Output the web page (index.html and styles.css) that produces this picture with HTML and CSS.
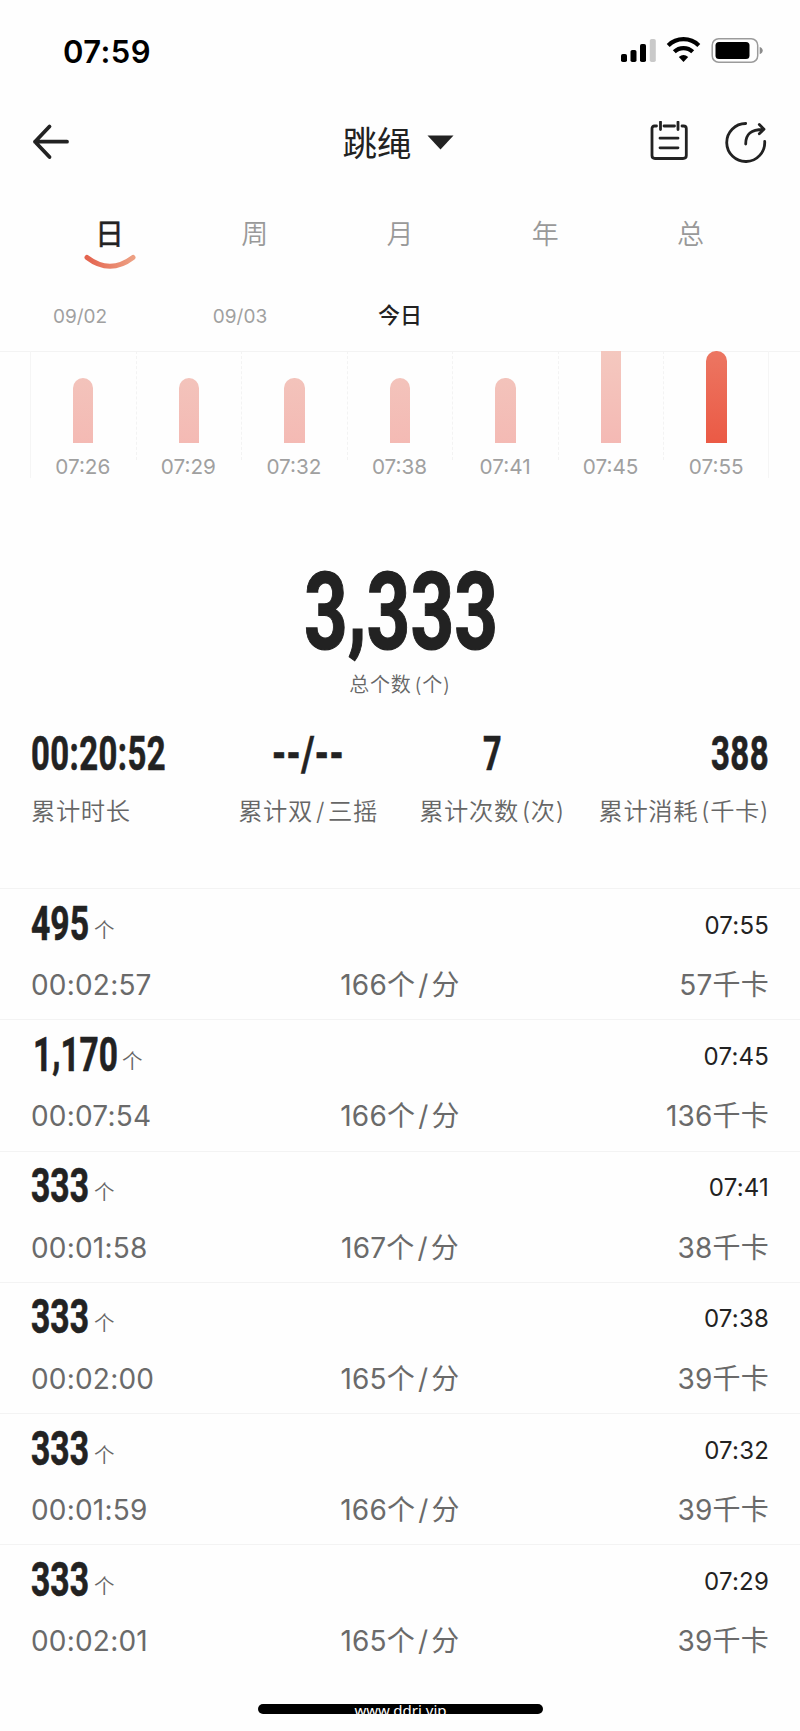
FILE: index.html
```html
<!DOCTYPE html>
<html lang="zh-CN">
<head>
<meta charset="utf-8">
<title>跳绳</title>
<link rel="stylesheet" href="styles.css">
</head>
<body>
<div class="screen">
  <div class="status">
    <span class="clock">07:59</span>
    <svg class="status-icons" width="144" height="28" viewBox="0 0 144 28">
      <rect x="1" y="17" width="6" height="8" rx="1.8"/>
      <rect x="10.5" y="13" width="6" height="12" rx="1.8"/>
      <rect x="20" y="7" width="6" height="18" rx="1.8"/>
      <rect x="29.800" y="2" width="6" height="23" rx="1.8" fill="#c9c9c9"/>
      <g fill="none" stroke="#000" stroke-width="4.200">
        <path d="M48.200 8.400a22 22 0 0 1 30.600 0"/>
        <path d="M54.300 14.800a13.200 13.200 0 0 1 18.400 0"/>
      </g>
      <path d="M58.800 20q4.700-3.800 9.400 0l-4.700 5z"/>
      <rect x="92.200" y="1.700" width="45.500" height="23.600" rx="6.500" fill="none" stroke="#9b9b9b" stroke-width="1.500"/>
      <rect x="95.500" y="5" width="34" height="17" rx="3.500"/>
      <path d="M139.700 10q3 1 3 3.600t-3 3.600z" fill="#8c8c8c"/>
    </svg>
  </div>

  <header class="header">
    <svg class="back" width="38" height="38" viewBox="0 0 38 38"><path d="M18.500 3.500 4 18.700 18.500 34M4 18.700H36"/></svg>
    <div class="title"><span>跳绳</span><svg width="27" height="15" viewBox="0 0 27 15"><path d="M.5.500h26L13.500 14.500z"/></svg></div>
    <div class="actions">
      <svg width="40" height="42" viewBox="0 0 40 42"><path d="M6.500 5H4.500Q2 5 2 7.500V34.500Q2 37.500 5 37.500H33Q36.300 37.500 36.300 34.500V7.500Q36.300 5 33.500 5H32M14 5H24.500M10.500 1V8.500M28 1V8.500M10 17.200H28M10 26.800H28"/></svg>
      <svg width="42" height="42" viewBox="0 0 42 42"><path d="M20.700 2.500A19 19 0 1 0 39.700 20.500M20.700 23C20.700 13 26 8.500 38 8.500M34.300 3.500 39 8.300 34.300 12.700"/></svg>
    </div>
  </header>

  <nav class="tabs">
    <div class="tab active">日<svg class="smile" width="54" height="18" viewBox="0 0 54 18"><defs><linearGradient id="smile"><stop offset="0" stop-color="#e4644f"/><stop offset="1" stop-color="#eda083"/></linearGradient></defs><path d="M4 4.500Q27 22 50 4.500" stroke="url(#smile)"/></svg></div>
    <div class="tab">周</div>
    <div class="tab">月</div>
    <div class="tab">年</div>
    <div class="tab">总</div>
  </nav>

  <div class="dates">
    <span>09/02</span><span>09/03</span><span class="today">今日</span>
  </div>

  <div class="chart">
    <div class="col"><div class="plot"><i class="bar"></i></div><span>07:26</span></div>
    <div class="col"><div class="plot"><i class="bar"></i></div><span>07:29</span></div>
    <div class="col"><div class="plot"><i class="bar"></i></div><span>07:32</span></div>
    <div class="col"><div class="plot"><i class="bar"></i></div><span>07:38</span></div>
    <div class="col"><div class="plot"><i class="bar"></i></div><span>07:41</span></div>
    <div class="col"><div class="plot"><i class="bar full"></i></div><span>07:45</span></div>
    <div class="col"><div class="plot"><i class="bar selected"></i></div><span>07:55</span></div>
  </div>

  <section class="total">
    <svg class="num large" width="194" height="100" viewBox="0 0 194 100"><text x="1" y="85" font-size="108" textLength="194" lengthAdjust="spacingAndGlyphs">3<tspan dy="-7">,</tspan><tspan dy="7">333</tspan></text></svg>
    <div class="total-label">总个数<span class="paren">(</span>个)</div>
  </section>

  <section class="stats">
    <div class="stat"><svg class="num" width="135" height="46" viewBox="0 0 135 46"><text x="-1" y="39.500" font-size="48" textLength="135" lengthAdjust="spacingAndGlyphs">00:20:52</text></svg><span>累计时长</span></div>
    <div class="stat"><svg class="num" width="72" height="46" viewBox="0 0 72 46"><text x="0" y="39.500" font-size="48" textLength="72" lengthAdjust="spacingAndGlyphs">--/--</text></svg><span>累计双<b>/</b>三摇</span></div>
    <div class="stat"><svg class="num" width="19" height="46" viewBox="0 0 19 46"><text x="0" y="39.500" font-size="48" textLength="19" lengthAdjust="spacingAndGlyphs">7</text></svg><span>累计次数<span class="paren">(</span>次)</span></div>
    <div class="stat"><svg class="num" width="58" height="46" viewBox="0 0 58 46"><text x="1" y="39.500" font-size="48" textLength="58" lengthAdjust="spacingAndGlyphs">388</text></svg><span>累计消耗<span class="paren">(</span>千卡)</span></div>
  </section>

  <main class="list">
    <article class="row">
      <div class="top"><svg class="num" width="58" height="46" viewBox="0 0 58 46"><text x="-1" y="40" font-size="48" textLength="58" lengthAdjust="spacingAndGlyphs">495</text></svg><span class="unit">个</span><time>07:55</time></div>
      <div class="detail"><span>00:02:57</span><span>166个<b>/</b>分</span><span>57千卡</span></div>
    </article>
    <article class="row">
      <div class="top"><svg class="num" width="86" height="46" viewBox="0 0 86 46"><text x="1" y="40" font-size="48" textLength="85" lengthAdjust="spacingAndGlyphs">1<tspan dy="-3">,</tspan><tspan dy="3">170</tspan></text></svg><span class="unit">个</span><time>07:45</time></div>
      <div class="detail"><span>00:07:54</span><span>166个<b>/</b>分</span><span>136千卡</span></div>
    </article>
    <article class="row">
      <div class="top"><svg class="num" width="58" height="46" viewBox="0 0 58 46"><text x="-1" y="40" font-size="48" textLength="58" lengthAdjust="spacingAndGlyphs">333</text></svg><span class="unit">个</span><time>07:41</time></div>
      <div class="detail"><span>00:01:58</span><span>167个<b>/</b>分</span><span>38千卡</span></div>
    </article>
    <article class="row">
      <div class="top"><svg class="num" width="58" height="46" viewBox="0 0 58 46"><text x="-1" y="40" font-size="48" textLength="58" lengthAdjust="spacingAndGlyphs">333</text></svg><span class="unit">个</span><time>07:38</time></div>
      <div class="detail"><span>00:02:00</span><span>165个<b>/</b>分</span><span>39千卡</span></div>
    </article>
    <article class="row">
      <div class="top"><svg class="num" width="58" height="46" viewBox="0 0 58 46"><text x="-1" y="40" font-size="48" textLength="58" lengthAdjust="spacingAndGlyphs">333</text></svg><span class="unit">个</span><time>07:32</time></div>
      <div class="detail"><span>00:01:59</span><span>166个<b>/</b>分</span><span>39千卡</span></div>
    </article>
    <article class="row">
      <div class="top"><svg class="num" width="58" height="46" viewBox="0 0 58 46"><text x="-1" y="40" font-size="48" textLength="58" lengthAdjust="spacingAndGlyphs">333</text></svg><span class="unit">个</span><time>07:29</time></div>
      <div class="detail"><span>00:02:01</span><span>165个<b>/</b>分</span><span>39千卡</span></div>
    </article>
  </main>

  <div class="home"><span>www.ddrj.vip</span></div>
</div>
</body>
</html>
```

FILE: styles.css
```css
* { box-sizing: border-box; }
body {
  margin: 0;
  background: #fefefe;
  color: #222;
  font-family: Inter, "Noto Sans CJK SC", sans-serif;
}
svg { display: block; flex: none; }
.screen {
  width: 800px;
  height: 1731px;
  overflow: hidden;
  display: flex;
  flex-direction: column;
}
.screen > * { flex: none; }

.status {
  height: 102px;
  padding: 0 37px 0 63px;
  display: flex;
  align-items: center;
  justify-content: space-between;
}
.clock { font-size: 31px; font-weight: 600; letter-spacing: .4px; color: #000; }
.status-icons { margin: 0 -1px 0 0; }

.header {
  height: 80px;
  padding: 0 33px 0 31px;
  display: grid;
  grid-template-columns: 1fr auto 1fr;
  align-items: center;
}
.back, .actions svg {
  fill: none;
  stroke: #222;
  stroke-width: 2.8;
  stroke-linecap: round;
  stroke-linejoin: round;
}
.back { stroke-width: 3.8; }
.title { display: flex; align-items: center; gap: 15px; font-size: 34.5px; line-height: 40px; margin-left: -2px; }
.title span { padding-top: 3px; }
.title svg { fill: #222; }
.actions { display: flex; justify-content: flex-end; gap: 35px; }

.tabs {
  height: 104px;
  padding: 0 37px;
  display: grid;
  grid-template-columns: repeat(5, 1fr);
}
.tab {
  height: 105px;
  line-height: 105px;
  text-align: center;
  font-size: 27px;
  font-weight: 350;
  color: #999;
  position: relative;
}
.tab.active { color: #222; font-size: 29px; font-weight: 400; -webkit-text-stroke: .5px #222; }
.smile { position: absolute; left: 50%; top: 71px; margin-left: -27px; fill: none; stroke-width: 5; stroke-linecap: round; }

.dates {
  height: 66px;
  display: grid;
  grid-template-columns: repeat(5, 1fr);
  line-height: 61px;
  text-align: center;
  font-size: 19px;
  color: #a0a0a0;
  border-bottom: 1px solid #f3f3f3;
}
.today { color: #222; font-size: 22px; font-weight: 500; line-height: 58px; }

.chart {
  margin: -1px 31px 0 30px;
  height: 127px;
  display: grid;
  grid-template-columns: repeat(7, 1fr);
  box-shadow: inset 1px 0 #f5f5f5, inset -1px 0 #f5f5f5;
}
.plot {
  height: 109px;
  padding-bottom: 17px;
  display: flex;
  align-items: flex-end;
  justify-content: center;
}
.col + .col .plot { border-left: 1px dashed #f3f3f3; }
.bar {
  width: 20.5px;
  height: 65px;
  border-radius: 10px 10px 0 0;
  background: linear-gradient(#f3c3bb, #f4bab4);
}
.bar.full { height: 92px; border-radius: 0; background: linear-gradient(#f4c8bf, #f4b9b4); }
.bar.selected { height: 92px; background: linear-gradient(#ec7662, #eb5a45); }
.col span { display: block; text-align: center; font-size: 20.7px; line-height: 14px; color: #a0a0a0; }

.num {
  overflow: visible;
  fill: #222;
  stroke: #222;
  stroke-width: .6;
  font-family: Roboto, sans-serif;
  font-weight: 700;
}
.num.large { stroke-width: 1.2; }
.total {
  height: 231px;
  padding-top: 86px;
  display: flex;
  flex-direction: column;
  align-items: center;
}
.total-label { font-size: 20px; line-height: 43px; letter-spacing: .8px; font-weight: 350; color: #666; }
.paren { margin-left: 3px; }

.stats {
  height: 179px;
  margin: 0 32px;
  padding-top: 21px;
  display: grid;
  grid-template-columns: repeat(4, 1fr);
}
.stat {
  display: flex;
  flex-direction: column;
  align-items: center;
  gap: 15px;
  white-space: nowrap;
  font-size: 24.3px;
  line-height: 40px;
  font-weight: 350;
  letter-spacing: .6px;
  color: #666;
}
.stat:first-child { align-items: flex-start; }
.stat:first-child span { margin-left: -1px; }
.stat:last-child { align-items: flex-end; }
.stat:last-child > span { margin-right: -1px; }
b { font-weight: inherit; margin: 0 3px; }

.row {
  height: 131.3px;
  border-top: 1.3px solid #f3f3f3;
  padding: 0 32px;
}
.top { height: 67px; display: flex; align-items: center; }
.unit { font-size: 20.5px; line-height: 22px; font-weight: 350; color: #666; margin: 16px 0 0 4px; }
.top time { margin: 0 -1px 0 auto; font-size: 24px; letter-spacing: .2px; padding-top: 5px; }
.detail {
  display: grid;
  grid-template-columns: 1fr 1fr 1fr;
  margin: 0 -1px;
  line-height: 59px;
  font-size: 28px;
  font-weight: 400;
  letter-spacing: .2px;
  color: #6a6a6a;
}
.detail span:nth-child(2) { text-align: center; }
.detail span:nth-child(3) { text-align: right; }

.home {
  width: 285px;
  height: 10px;
  margin: 28px auto 0 258px;
  border-radius: 5px;
  background: #000;
  color: #fff;
  text-align: center;
  font: 15px/13px "Noto Sans", sans-serif;
}
```
